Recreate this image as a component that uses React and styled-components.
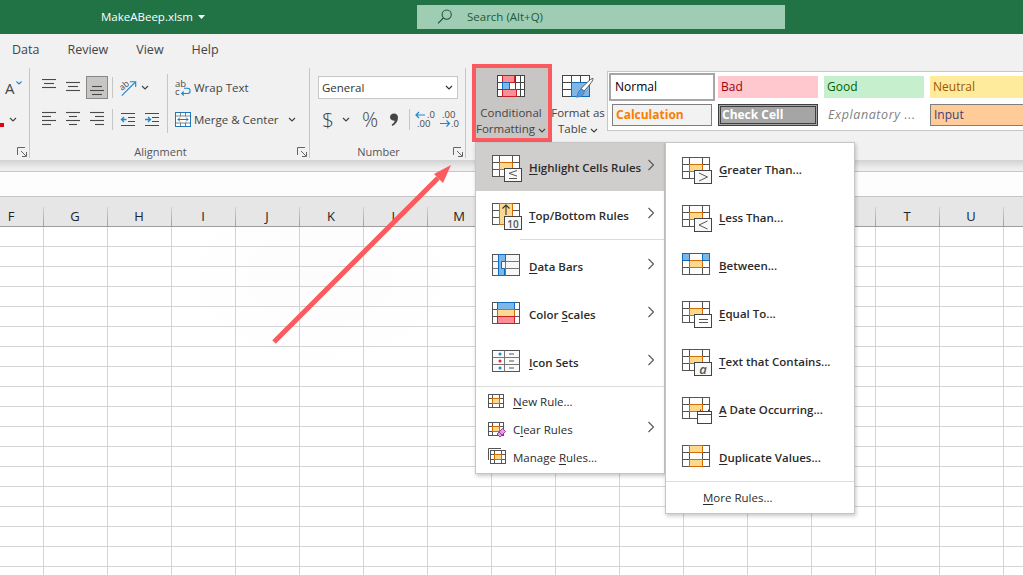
import React from "react";
import styled, { createGlobalStyle } from "styled-components";

const uiFont = `"Open Sans", "Noto Sans", "Liberation Sans", sans-serif`;
const orange = "#d96a00";
const orangeFill = "#fbd98f";
const blue = "#0f6cbd";
const blueFill = "#7fb6e8";
const redLine = "#c81e24";
const redFill = "#fb8e96";
const ink = "#4a4a4a";

const GlobalStyle = createGlobalStyle`
  html, body {
    margin: 0;
    padding: 0;
    overflow: hidden;
    background: #fff;
  }
  * {
    box-sizing: border-box;
  }
`;

const Page = styled.div`
  position: relative;
  width: 1023px;
  height: 575px;
  overflow: hidden;
  display: flex;
  flex-direction: column;
  font-family: ${uiFont};
  font-size: 11.5px;
  color: #444;
`;

const TitleBar = styled.div`
  flex: none;
  height: 34px;
  background: #217346;
  display: flex;
  align-items: center;
  padding-bottom: 1px;
`;

const FileName = styled.div`
  width: 417px;
  padding-left: 101px;
  color: #fff;
  font-size: 11.5px;
  display: flex;
  align-items: center;
  gap: 5px;
`;

const SearchBox = styled.div`
  width: 368px;
  height: 24px;
  background: #9fcdb3;
  color: #1d5a39;
  display: flex;
  align-items: center;
  padding-left: 20px;
  gap: 14px;
  font-size: 11.5px;
`;

const TabRow = styled.div`
  flex: none;
  height: 34px;
  background: #f1f1f1;
  display: flex;
  align-items: center;
  gap: 28px;
  padding: 0 0 4px 12px;
`;

const Tab = styled.span`
  font-size: 12.5px;
  color: #444;
`;

const Ribbon = styled.div`
  flex: none;
  height: 92px;
  background: #f1f1f1;
  display: flex;
  padding-bottom: 2px;
`;

const Group = styled.div`
  position: relative;
  flex: none;
  width: ${(p) => p.$width}px;
  border-right: 1px solid #c6c6c6;
  display: flex;
  flex-direction: column;
  padding-top: 8px;
`;

const GroupBody = styled.div`
  flex: 1;
  display: flex;
  align-items: flex-start;
`;

const StylesArea = styled(GroupBody)`
  min-width: 0;
  margin-top: 8px;
`;

const GroupFooter = styled.div`
  height: 12px;
  line-height: 12px;
  padding-right: 18px;
  display: flex;
  align-items: center;
  justify-content: center;
  font-size: 11px;
  color: #555;
`;

const LauncherSlot = styled.span`
  position: absolute;
  right: 2px;
  bottom: 0;
  height: 12px;
  display: flex;
  align-items: center;
`;

const Rows = styled.div`
  display: flex;
  flex-direction: column;
  gap: 9px;
  padding-left: ${(p) => p.$left || 0}px;
`;

const ToolRow = styled.div`
  height: 23px;
  display: flex;
  align-items: center;
  padding-left: ${(p) => p.$inset || 0}px;
`;

const ToolCell = styled.span`
  flex: none;
  width: ${(p) => (p.$active ? 22 : p.$width || 24)}px;
  margin: 0 ${(p) => (p.$active ? 1 : 0)}px;
  height: 23px;
  display: flex;
  align-items: center;
  justify-content: center;
  color: #444;
  font-size: ${(p) => p.$size || 12}px;
  font-weight: ${(p) => p.$weight || 400};
  background: ${(p) => (p.$active ? "#c8c6c4" : "transparent")};
  outline: ${(p) => (p.$active ? "1px solid #8a8886" : "none")};
  outline-offset: -1px;
`;

const GrowLetter = styled.span`
  font-size: 15px;
  line-height: 18px;
  color: #444;
`;

const GrowCaret = styled.svg`
  margin: 0 0 9px 1px;
`;

const ThinSeparator = styled.span`
  flex: none;
  width: 1px;
  height: 21px;
  margin: 0 3px;
  background: #c6c6c6;
`;

const BlockSeparator = styled.span`
  flex: none;
  width: 1px;
  height: 59px;
  margin: -2px 0 0 3px;
  background: #c6c6c6;
`;

const ToolLabel = styled.span`
  flex: none;
  width: ${(p) => p.$width || "auto"};
  font-size: 11.5px;
  color: #444;
  white-space: nowrap;
`;

const NumberCombo = styled.div`
  width: 140px;
  height: 23px;
  margin-left: 8px;
  background: #fff;
  border: 1px solid #c6c6c6;
  display: flex;
  align-items: center;
  justify-content: space-between;
  padding: 0 4px 0 3px;
  font-size: 11.5px;
  color: #333;
`;

const BigButton = styled.div`
  flex: none;
  width: ${(p) => p.$width}px;
  height: ${(p) => (p.$marked ? 78 : 70)}px;
  margin: ${(p) => (p.$marked ? "-12px 0 0 6px" : "-8px 0 0 0")};
  padding: 7px ${(p) => (p.$marked ? 2 : 0)}px 0 0;
  background: ${(p) => (p.$marked ? "#c8c6c4" : "transparent")};
  border: ${(p) => (p.$marked ? "4px solid #fb5a5f" : "none")};
  display: flex;
  flex-direction: column;
  align-items: center;
  font-size: 11.5px;
  line-height: 15.5px;
  color: #444;
  white-space: nowrap;
  text-align: center;
`;

const BigLabel = styled.div`
  margin-top: ${(p) => p.$top}px;
`;

const Gallery = styled.div`
  flex: 1;
  height: 60px;
  margin: -5px 0 0 3px;
  background: #fff;
  border: 1px solid #c6c6c6;
  border-right: none;
  padding: 4px 0 0 4px;
  overflow: hidden;
  display: grid;
  grid-template-columns: repeat(4, 100px);
  grid-auto-rows: 22px;
  column-gap: 6px;
  row-gap: 6px;
`;

const styleCells = {
  normal: "background:#fff;color:#000;outline:2px solid #a6a6a6;outline-offset:1px;",
  bad: "background:#ffc7ce;color:#9c0006;",
  good: "background:#c6efce;color:#006100;",
  neutral: "background:#ffeb9c;color:#9c5700;",
  calculation: "background:#f2f2f2;color:#fa7d00;font-weight:700;border:1px solid #7f7f7f;",
  check: "background:#a5a5a5;color:#fff;font-weight:700;border:3px double #3f3f3f;padding-left:1px;",
  explanatory: "background:#fff;color:#7f7f7f;font-style:italic;font-size:12.5px;letter-spacing:.6px;padding-left:4px;",
  input: "background:#ffcc99;color:#3f3f76;border:1px solid #7f7f7f;",
};

const StyleCell = styled.div`
  display: flex;
  align-items: center;
  padding-left: 3px;
  padding-bottom: 2px;
  font-size: 12px;
  white-space: nowrap;
  overflow: hidden;
  ${(p) => styleCells[p.$kind]}
`;

const RibbonShadow = styled.div`
  flex: none;
  height: 12px;
  background: linear-gradient(#d2d2d2, #ececec 70%, #f0f0f0);
  border-bottom: 1px solid #c6c6c6;
`;

const FormulaBar = styled.div`
  flex: none;
  height: 25px;
  background: #fdfdfd;
  border-bottom: 1px solid #c6c6c6;
`;

const ColumnHeader = styled.div`
  flex: none;
  height: 30px;
  margin-left: -20px;
  background: #e6e6e6;
  border-bottom: 1px solid #9e9e9e;
  display: flex;
  width: 1100px;
`;

const ColumnLabel = styled.div`
  flex: none;
  width: 64px;
  height: 100%;
  padding: 10px 2px 0 0;
  display: flex;
  justify-content: center;
  font-size: 13px;
  line-height: 18px;
  color: #222;
  position: relative;
  &::after {
    content: "";
    position: absolute;
    right: 0;
    top: 10px;
    bottom: 0;
    width: 1px;
    background: linear-gradient(#d2d2d2, #9e9e9e);
  }
`;

const Sheet = styled.div`
  flex: 1;
  background-color: #fff;
  background-image: radial-gradient(ellipse 150px 100px at 320px 50px, rgba(0, 0, 0, 0.012), transparent),
    linear-gradient(to right, transparent 63px, #d4d4d4 63px),
    linear-gradient(to bottom, transparent 19px, #d4d4d4 19px);
  background-size: 100% 100%, 64px 20px, 64px 20px;
  background-position: 0 0, -20px 0, -20px 0;
`;

const Menu = styled.div`
  position: absolute;
  top: 142px;
  left: ${(p) => p.$left}px;
  width: 190px;
  padding: ${(p) => p.$pad}px 0 2px;
  background: #fff;
  border: 1px solid #c6c6c6;
  box-shadow: 1px 2px 4px rgba(0, 0, 0, 0.22);
  z-index: ${(p) => p.$layer};
`;

const MenuRow = styled.div`
  position: relative;
  height: ${(p) => (p.$small ? 28 : 48)}px;
  display: flex;
  align-items: center;
  padding-left: ${(p) => (p.$small ? 12 : 16)}px;
  gap: ${(p) => (p.$small ? 7 : 5)}px;
  background: ${(p) => (p.$active ? "#d0cecd" : "transparent")};
  font-size: 11.5px;
  font-weight: ${(p) => (p.$small ? 400 : 600)};
  color: #2b2b2b;
  white-space: nowrap;
  u {
    text-underline-offset: 2px;
  }
`;

const MenuText = styled.span`
  margin-left: ${(p) => p.$left || 0}px;
`;

const MenuChevron = styled.span`
  position: absolute;
  right: 9px;
  top: 50%;
  margin-top: -8px;
  display: flex;
`;

const MenuDivider = styled.div`
  height: ${(p) => p.$height}px;
  margin-left: ${(p) => p.$indent || 0}px;
  border-top: 1px solid #dcdcdc;
`;

const RuleSvg = styled.svg`
  flex: none;
  margin-top: 4px;
`;

const Callout = styled.svg`
  position: absolute;
  left: 0;
  top: 0;
  z-index: 6;
  pointer-events: none;
`;

const Chevron = ({ color = "#444" }) => (
  <svg width="8" height="5" viewBox="0 0 8 5">
    <path d="M1 1l3 3 3-3" fill="none" stroke={color} strokeWidth="1.2" />
  </svg>
);

const Launcher = () => (
  <svg width="10" height="10" viewBox="0 0 10 10">
    <path d="M.5 8V.5H8M4 4l5 5M9.5 5v4.5H5" fill="none" stroke="#666" />
  </svg>
);

const SearchIcon = () => (
  <svg width="16" height="15" viewBox="0 0 16 15">
    <circle cx="9.7" cy="5.6" r="4.6" fill="none" stroke="#1d5a39" strokeWidth="1.1" />
    <path d="M6.4 9L1 14.4" stroke="#1d5a39" strokeWidth="1.2" />
  </svg>
);

const LinesIcon = ({ lines, top = 0 }) => (
  <svg width="16" height="18" viewBox="0 0 16 18">
    {lines.map(([from, to], i) => (
      <path key={i} d={`M${from} ${top + i * 4 + 0.5}H${to}`} stroke={ink} strokeWidth="1.1" />
    ))}
  </svg>
);

const IndentIcon = ({ flip }) => (
  <svg width="16" height="13" viewBox="0 0 16 13">
    <path d="M1 .5h14M8 4.5h7M8 8.5h7M1 12.5h14" stroke={ink} strokeWidth="1.1" />
    <path
      d={flip ? "M1 6.5h5M4 4l2.5 2.5L4 9" : "M6.5 6.5h-5M4 4L1.5 6.5 4 9"}
      fill="none"
      stroke="#1e88d2"
      strokeWidth="1.4"
    />
  </svg>
);

const OrientationIcon = () => (
  <svg width="25" height="24" viewBox="-3 -3 25 24">
    <path d="M3 17L17 3" stroke="#1e88d2" strokeWidth="1.2" />
    <path d="M11.5 2.5H17.5V8" fill="none" stroke="#1e88d2" strokeWidth="1.2" />
    <text x="1" y="10" fontSize="9" fill={ink} transform="rotate(-40 5 8)" fontFamily={uiFont}>
      ab
    </text>
  </svg>
);

const WrapIcon = () => (
  <svg width="16" height="25" viewBox="0 -4 16 25">
    <text x="0" y="8" fontSize="9.5" fill={ink} fontFamily={uiFont}>ab</text>
    <text x="0" y="16" fontSize="9.5" fill={ink} fontFamily={uiFont}>c</text>
    <path
      d="M7 14.5h5.5a2.6 2.6 0 0 0 0-5.2H9M8.8 12.5L6.7 14.5l2.1 2"
      fill="none"
      stroke="#1e88d2"
      strokeWidth="1.1"
    />
  </svg>
);

const MergeIcon = () => (
  <svg width="16" height="15" viewBox="0 0 16 15">
    <rect x=".5" y=".5" width="15" height="14" fill="#fff" stroke="#1e78c2" />
    <path d="M.5 4h15M.5 11h15M5.5.5V4M10.5.5V4M5.5 11v3.5M10.5 11v3.5" stroke={ink} strokeWidth=".7" />
    <path d="M3 7.5h10M5 5.5l-2 2 2 2M11 5.5l2 2-2 2" fill="none" stroke="#1e78c2" strokeWidth="1" />
  </svg>
);

const CommaIcon = () => (
  <svg width="10" height="14" viewBox="0 0 10 14">
    <path
      d="M5 .5c2.600 0 4 1.900 4 4.300 0 3.400-2.300 6.500-5.600 8.200l-.8-1.200c1.700-1.100 2.900-2.500 3.200-4C3 7.800 1 6.300 1 4.200 1 2 2.800.5 5 .5z"
      fill="#444"
    />
  </svg>
);

const DecimalIcon = ({ more }) => (
  <svg width="22" height="23" viewBox="0 -3 22 23" fontFamily={uiFont} fontSize="9.5" fill={ink}>
    {more ? (
      <>
        <text x="4" y="7">.00</text>
        <text x="13" y="16">.0</text>
        <path d="M2 12.500h9M8.500 9.500l3 3-3 3" fill="none" stroke="#1e88d2" strokeWidth="1.2" />
      </>
    ) : (
      <>
        <text x="13" y="7">.0</text>
        <text x="3" y="16">.00</text>
        <path d="M11 4H2.500M5 1L2 4l3 3" fill="none" stroke="#1e88d2" strokeWidth="1.2" />
      </>
    )}
  </svg>
);

const FontColorIcon = () => (
  <svg width="18" height="14" viewBox="0 0 18 14">
    <rect x="0" y="10" width="4" height="4" fill="#e3000f" />
    <path d="M10 5l3 3 3-3" fill="none" stroke="#444" strokeWidth="1.1" />
  </svg>
);

/* tiny spreadsheet drawn under most of the conditional formatting icons */
const CellGrid = ({ fill = "#fff" }) => (
  <>
    <rect x=".5" y=".5" width="27" height="21" fill={fill} stroke="#555" />
    <path d="M7.500.5v21M20.500.5v21M.5 7.500h27M.5 14.500h27" stroke="#555" />
  </>
);

const Cell = ({ x, y, w = 13, h = 7, fill = orangeFill, line = orange }) => (
  <rect x={x + 0.5} y={y + 0.5} width={w} height={h} fill={fill} stroke={line} />
);

const BadgeBox = () => <rect x="12.500" y="13.500" width="17" height="13" fill="#f8f8f8" stroke="#444" />;

const BadgeText = ({ children, size, italic }) => (
  <text
    x="21"
    y="24.500"
    textAnchor="middle"
    fontSize={size}
    fontStyle={italic ? "italic" : "normal"}
    fill="#555"
    fontFamily={uiFont}
  >
    {children}
  </text>
);

const BadgeMark = ({ d }) => <path d={d} fill="none" stroke="#555" strokeWidth="1" />;

const ruleIcons = {
  highlight: (
    <>
      <CellGrid />
      <Cell x={7} y={7} />
      <BadgeBox />
      <BadgeMark d="M25 15.500l-8 2.800 8 2.800M17 23.500h8" />
    </>
  ),
  top: (
    <>
      <CellGrid />
      <Cell x={7} y={0} h={21} />
      <path d="M14 12V2M10.500 5.500L14 2l3.500 3.500" fill="none" stroke="#333" strokeWidth="1.100" />
      <BadgeBox />
      <BadgeText size={10}>10</BadgeText>
    </>
  ),
  bars: (
    <>
      <rect x=".5" y=".5" width="27" height="21" fill="#f7f7f7" stroke="#555" />
      <path d="M6.500.5v21M13.500.5v21M.5 7.500h27M.5 14.500h27" stroke="#777" />
      <path d="M6.500.5h7v7h-4v7h3v7h-6z" fill={blueFill} stroke={blue} />
    </>
  ),
  scales: (
    <>
      <CellGrid />
      <Cell x={5} y={0} w={17} fill={blueFill} line={blue} />
      <Cell x={5} y={7} w={17} />
      <Cell x={5} y={14} w={17} fill={redFill} line={redLine} />
    </>
  ),
  icons: (
    <>
      <rect x=".5" y=".5" width="27" height="21" fill="#fafafa" stroke="#555" />
      <path d="M12.500.5v21M.5 7.500h27M.5 14.500h27" stroke="#777" />
      <circle cx="8" cy="4" r="1.500" fill="#1e88d2" />
      <circle cx="8" cy="11" r="1.500" fill="#e3232b" />
      <circle cx="8" cy="18" r="1.500" fill="#1e88d2" />
      <path d="M17 4h5M17 11h5M17 18h5" stroke="#555" />
    </>
  ),
  greater: (
    <>
      <CellGrid />
      <Cell x={7} y={7} />
      <BadgeBox />
      <BadgeMark d="M17 16l8.500 4-8.500 4" />
    </>
  ),
  less: (
    <>
      <CellGrid />
      <Cell x={7} y={7} />
      <BadgeBox />
      <BadgeMark d="M25.500 16L17 20l8.500 4" />
    </>
  ),
  between: (
    <>
      <CellGrid />
      <Cell x={7} y={7} />
      <Cell x={0} y={0} w={7} fill={blueFill} line={blue} />
      <Cell x={20} y={0} w={7} fill={blueFill} line={blue} />
    </>
  ),
  equal: (
    <>
      <CellGrid />
      <Cell x={7} y={7} />
      <rect x="12.500" y="13.500" width="17" height="13" fill="#fff" stroke="#444" />
      <path d="M17 18.500h9M17 21.500h9" stroke="#555" />
    </>
  ),
  text: (
    <>
      <CellGrid />
      <Cell x={7} y={7} />
      <BadgeBox />
      <BadgeText size={13} italic>a</BadgeText>
    </>
  ),
  date: (
    <>
      <CellGrid />
      <Cell x={7} y={7} />
      <rect x="15.500" y="14.500" width="14" height="12" fill="#fff" stroke="#444" />
      <path d="M15.500 17.500h14M18.500 12.500v2M26.500 12.500v2" stroke="#444" />
    </>
  ),
  duplicate: (
    <>
      <CellGrid />
      <Cell x={7} y={0} />
      <Cell x={7} y={14} />
    </>
  ),
};

const RuleIcon = ({ kind }) => (
  <RuleSvg width="32" height="28" viewBox="0 0 32 28">
    {ruleIcons[kind]}
  </RuleSvg>
);

const SmallGrid = () => (
  <>
    <rect x=".5" y="2.500" width="15" height="13" fill="#fff" stroke="#555" />
    <path d="M4.500 2.500v13M11.500 2.500v13M.5 6.500h15M.5 11.500h15" stroke="#555" />
    <rect x="4.500" y="6.500" width="7" height="5" fill={orangeFill} stroke={orange} />
  </>
);

const smallIcons = {
  add: <SmallGrid />,
  clear: (
    <>
      <SmallGrid />
      <path d="M9 14l5.500-5.500 3 3L12 17z" fill="#d9a5dd" stroke="#9b3fa5" />
      <path d="M11 12l3 3" stroke="#9b3fa5" />
    </>
  ),
  manage: (
    <>
      <path d="M.5 12V.5H13" fill="none" stroke="#555" />
      <g transform="translate(2 0)">
        <SmallGrid />
      </g>
    </>
  ),
};

const SmallRuleIcon = ({ kind }) => (
  <svg width="18" height="18" viewBox="0 0 18 18">
    {smallIcons[kind]}
  </svg>
);

const ConditionalIcon = () => (
  <svg width="29" height="23" viewBox="0 0 29 23">
    <rect x=".5" y=".5" width="27" height="21" fill="#fff" stroke="#444" />
    <path d="M5.500.5v21M12.500 7.500v7M18.500.5v21M23.500.5v21M.5 7.500h27M.5 14.500h27" stroke="#444" />
    <rect x="5.500" y=".5" width="12" height="7" fill={redFill} stroke={redLine} />
    <rect x="5.500" y="7.500" width="7" height="7" fill={blueFill} stroke={blue} />
    <rect x="5.500" y="14.500" width="14" height="7" fill={redFill} stroke={redLine} />
  </svg>
);

const TableIcon = () => (
  <svg width="32" height="28" viewBox="0 0 32 28">
    <rect x=".5" y=".5" width="27" height="21" fill="#fff" stroke="#444" />
    <path d="M9.500.5v21M18.500.5v21M.5 7.500h27M.5 14.500h27" stroke="#444" />
    <rect x="9.500" y="7.500" width="18" height="14" fill={blueFill} stroke={blue} />
    <path d="M31 3.500c.6 2-5.500 9-9 12.500l-3-2.400C22.500 10 29 3 31 3.500z" fill="#fff" stroke="#555" />
    <path d="M18.800 14.200c2 .1 3.300 1.300 3.300 2.700 0 3.300-4 5.400-8.100 5.100 2.400-1.400 1.800-6.400 4.800-7.800z" fill="#5b9bd5" stroke="#3f7fbf" />
  </svg>
);

const columns = ["F", "G", "H", "I", "J", "K", "L", "M", "N", "O", "P", "Q", "R", "S", "T", "U"];

const leftRules = [
  { kind: "highlight", label: <><u>H</u>ighlight Cells Rules</>, active: true },
  { kind: "top", label: <><u>T</u>op/Bottom Rules</>, divider: true },
  { kind: "bars", label: <><u>D</u>ata Bars</> },
  { kind: "scales", label: <>Color <u>S</u>cales</> },
  { kind: "icons", label: <><u>I</u>con Sets</> },
];

const rightRules = [
  { kind: "greater", label: <><u>G</u>reater Than...</> },
  { kind: "less", label: <><u>L</u>ess Than...</> },
  { kind: "between", label: <><u>B</u>etween...</> },
  { kind: "equal", label: <><u>E</u>qual To...</> },
  { kind: "text", label: <><u>T</u>ext that Contains...</> },
  { kind: "date", label: <><u>A</u> Date Occurring...</> },
  { kind: "duplicate", label: <><u>D</u>uplicate Values...</> },
];

const smallRules = [
  { kind: "add", label: <><u>N</u>ew Rule...</> },
  { kind: "clear", label: <>C<u>l</u>ear Rules</>, more: true },
  { kind: "manage", label: <>Manage <u>R</u>ules...</> },
];

const MenuChevronIcon = () => (
  <MenuChevron>
    <svg width="8" height="12" viewBox="0 0 8 12">
      <path d="M1.500 1l5 5-5 5" fill="none" stroke="#555" strokeWidth="1.100" />
    </svg>
  </MenuChevron>
);

const App = () => {
  return (
    <Page>
      <GlobalStyle />
      <TitleBar>
        <FileName>
          MakeABeep.xlsm
          <svg width="7" height="4" viewBox="0 0 7 4">
            <path d="M0 0h7L3.500 4z" fill="#fff" />
          </svg>
        </FileName>
        <SearchBox>
          <SearchIcon />
          Search (Alt+Q)
        </SearchBox>
      </TitleBar>

      <TabRow>
        <Tab>Data</Tab>
        <Tab>Review</Tab>
        <Tab>View</Tab>
        <Tab>Help</Tab>
      </TabRow>

      <Ribbon>
        <Group $width={30}>
          <GroupBody>
            <Rows>
              <ToolRow $inset={5}>
                <GrowLetter>A</GrowLetter>
                <GrowCaret width="6" height="4" viewBox="0 0 6 4">
                  <path d="M.5.5L3 3 5.500.5" fill="none" stroke="#1e88d2" strokeWidth="1.100" />
                </GrowCaret>
              </ToolRow>
              <ToolRow>
                <FontColorIcon />
              </ToolRow>
            </Rows>
          </GroupBody>
          <GroupFooter />
          <LauncherSlot>
            <Launcher />
          </LauncherSlot>
        </Group>

        <Group $width={280}>
          <GroupBody>
            <Rows $left={7}>
              <ToolRow>
                <ToolCell><LinesIcon lines={[[1, 15], [3, 13], [1, 15]]} /></ToolCell>
                <ToolCell><LinesIcon top={3} lines={[[1, 15], [3, 13], [1, 15]]} /></ToolCell>
                <ToolCell $active><LinesIcon top={7} lines={[[3, 13], [1, 15], [3, 13]]} /></ToolCell>
                <ThinSeparator />
                <ToolCell><OrientationIcon /></ToolCell>
                <ToolCell $width={10}><Chevron /></ToolCell>
              </ToolRow>
              <ToolRow>
                <ToolCell><LinesIcon top={1} lines={[[1, 15], [1, 10], [1, 15], [1, 10]]} /></ToolCell>
                <ToolCell><LinesIcon top={1} lines={[[1, 15], [4, 12], [1, 15], [4, 12]]} /></ToolCell>
                <ToolCell><LinesIcon top={1} lines={[[1, 15], [6, 15], [1, 15], [6, 15]]} /></ToolCell>
                <ThinSeparator />
                <ToolCell><IndentIcon /></ToolCell>
                <ToolCell><IndentIcon flip /></ToolCell>
              </ToolRow>
            </Rows>
            <BlockSeparator />
            <Rows $left={4}>
              <ToolRow>
                <ToolCell $width={22}><WrapIcon /></ToolCell>
                <ToolLabel>Wrap Text</ToolLabel>
              </ToolRow>
              <ToolRow>
                <ToolCell $width={22}><MergeIcon /></ToolCell>
                <ToolLabel $width="92px">Merge &amp; Center</ToolLabel>
                <ToolCell $width={12}><Chevron /></ToolCell>
              </ToolRow>
            </Rows>
          </GroupBody>
          <GroupFooter>Alignment</GroupFooter>
          <LauncherSlot>
            <Launcher />
          </LauncherSlot>
        </Group>

        <Group $width={156}>
          <GroupBody>
            <Rows>
              <NumberCombo>
                General
                <Chevron color="#333" />
              </NumberCombo>
              <ToolRow $inset={8}>
                <ToolCell $width={20} $size={21} $weight={300}>$</ToolCell>
                <ToolCell $width={16}><Chevron /></ToolCell>
                <ToolCell $width={4} />
                <ToolCell $size={20} $weight={300}>%</ToolCell>
                <ToolCell><CommaIcon /></ToolCell>
                <ThinSeparator />
                <ToolCell><DecimalIcon /></ToolCell>
                <ToolCell><DecimalIcon more /></ToolCell>
              </ToolRow>
            </Rows>
          </GroupBody>
          <GroupFooter>Number</GroupFooter>
          <LauncherSlot>
            <Launcher />
          </LauncherSlot>
        </Group>

        <StylesArea>
          <BigButton $width={80} $marked>
            <ConditionalIcon />
            <BigLabel $top={7}>
              Conditional
              <br />
              Formatting <Chevron />
            </BigLabel>
          </BigButton>
          <BigButton $width={52}>
            <TableIcon />
            <BigLabel $top={2}>
              Format as
              <br />
              Table <Chevron />
            </BigLabel>
          </BigButton>
          <Gallery>
            <StyleCell $kind="normal">Normal</StyleCell>
            <StyleCell $kind="bad">Bad</StyleCell>
            <StyleCell $kind="good">Good</StyleCell>
            <StyleCell $kind="neutral">Neutral</StyleCell>
            <StyleCell $kind="calculation">Calculation</StyleCell>
            <StyleCell $kind="check">Check Cell</StyleCell>
            <StyleCell $kind="explanatory">Explanatory ...</StyleCell>
            <StyleCell $kind="input">Input</StyleCell>
          </Gallery>
        </StylesArea>
      </Ribbon>

      <RibbonShadow />
      <FormulaBar />
      <ColumnHeader>
        {columns.map((c) => (
          <ColumnLabel key={c}>{c}</ColumnLabel>
        ))}
      </ColumnHeader>
      <Sheet />

      <Menu $left={475} $pad={0} $layer={4}>
        {leftRules.map((r) => (
          <React.Fragment key={r.kind}>
            <MenuRow $active={r.active}>
              <RuleIcon kind={r.kind} />
              <MenuText>{r.label}</MenuText>
              <MenuChevronIcon />
            </MenuRow>
            {r.divider && <MenuDivider $height={3} $indent={44} />}
          </React.Fragment>
        ))}
        <MenuDivider $height={1} />
        {smallRules.map((r) => (
          <MenuRow $small key={r.kind}>
            <SmallRuleIcon kind={r.kind} />
            <MenuText>{r.label}</MenuText>
            {r.more && <MenuChevronIcon />}
          </MenuRow>
        ))}
      </Menu>

      <Menu $left={665} $pad={2} $layer={5}>
        {rightRules.map((r) => (
          <MenuRow key={r.kind}>
            <RuleIcon kind={r.kind} />
            <MenuText>{r.label}</MenuText>
          </MenuRow>
        ))}
        <MenuDivider $height={2} />
        <MenuRow $small>
          <MenuText $left={25}>
            <u>M</u>ore Rules...
          </MenuText>
        </MenuRow>
      </Menu>

      <Callout width="1023" height="575" viewBox="0 0 1023 575">
        <path d="M274 342L438 178" stroke="#fb5a5f" strokeWidth="5" />
        <path d="M451 165L434 174L443 183z" fill="#fb5a5f" />
      </Callout>
    </Page>
  );
};

export default App;
